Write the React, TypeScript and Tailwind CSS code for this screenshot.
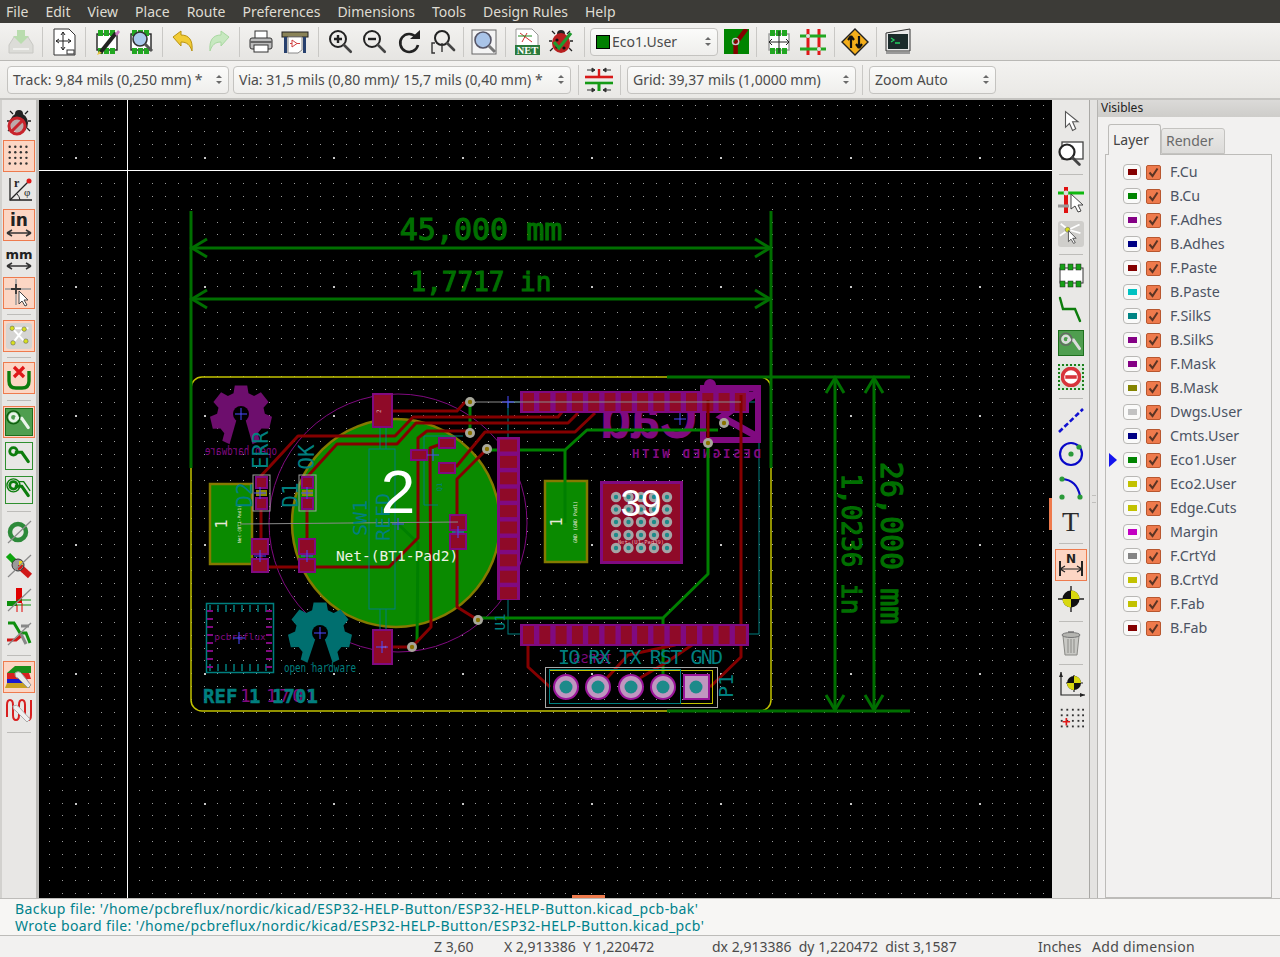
import type { ReactNode } from 'react'

const ui = { fontFamily: '"Noto Sans", sans-serif' }
const mono = '"DejaVu Sans Mono", monospace'

const menus = ['File', 'Edit', 'View', 'Place', 'Route', 'Preferences', 'Dimensions', 'Tools', 'Design Rules', 'Help']

const layers = [
  ['F.Cu', 'bg-[#840000]'],
  ['B.Cu', 'bg-[#008400]'],
  ['F.Adhes', 'bg-[#840084]'],
  ['B.Adhes', 'bg-[#000084]'],
  ['F.Paste', 'bg-[#840000]'],
  ['B.Paste', 'bg-[#00c2c2]'],
  ['F.SilkS', 'bg-[#008484]'],
  ['B.SilkS', 'bg-[#840084]'],
  ['F.Mask', 'bg-[#840084]'],
  ['B.Mask', 'bg-[#848400]'],
  ['Dwgs.User', 'bg-[#c2c2c2]'],
  ['Cmts.User', 'bg-[#000084]'],
  ['Eco1.User', 'bg-[#008400]'],
  ['Eco2.User', 'bg-[#c2c200]'],
  ['Edge.Cuts', 'bg-[#c2c200]'],
  ['Margin', 'bg-[#c200c2]'],
  ['F.CrtYd', 'bg-[#848484]'],
  ['B.CrtYd', 'bg-[#c2c200]'],
  ['F.Fab', 'bg-[#c2c200]'],
  ['B.Fab', 'bg-[#840000]'],
]

function Ic({ children, size = 'w-[28px] h-[28px]' }: { children: ReactNode; size?: string }) {
  return (
    <svg className={size} viewBox="0 0 28 28" fill="none">
      {children}
    </svg>
  )
}

function Btn({ children, w = 'w-[34px]' }: { children: ReactNode; w?: string }) {
  return <div className={`${w} h-[34px] flex items-center justify-center shrink-0`}>{children}</div>
}

function VSep({ w }: { w: string }) {
  return (
    <div className={`${w} h-[30px] flex justify-center shrink-0`}>
      <div className="w-px h-full bg-[#c9c8c5]" />
    </div>
  )
}

function Combo({ label, w, swatch }: { label: string; w: string; swatch?: boolean }) {
  return (
    <div className={`${w} h-[28px] shrink-0 rounded-[4px] border border-[#c4c3c0] bg-gradient-to-b from-[#fbfbfa] to-[#efeeec] flex items-center pl-[5px] pr-[6px] text-[14px] text-[#4b4b4b] whitespace-nowrap`}>
      {swatch && <span className="w-[14px] h-[14px] bg-[#007f00] border border-black mr-[2px]" />}
      <span className="flex-1">{label}</span>
      <span className="flex flex-col gap-[3px]">
        <span className="w-0 h-0 border-x-[3px] border-x-transparent border-b-[3px] border-b-[#6a6a6a]" />
        <span className="w-0 h-0 border-x-[3px] border-x-transparent border-t-[3px] border-t-[#6a6a6a]" />
      </span>
    </div>
  )
}

function Chip({ stroke = '#222' }: { stroke?: string }) {
  return (
    <>
      <rect x="4" y="6" width="20" height="16" fill="#fff" stroke={stroke} strokeWidth="1.4" />
      {[5, 11, 17].map((x) => (
        <g key={x}>
          <rect x={x} y="2" width="5" height="6" fill="#22a722" />
          <rect x={x} y="20" width="5" height="6" fill="#22a722" />
        </g>
      ))}
    </>
  )
}

function Bug({ mark }: { mark: 'check' | 'no' }) {
  return (
    <>
      <path d="M8 6 5 3M20 6l3-3M5 13H2M26 13h-3M6 20l-3 3M22 20l3 3" stroke="#222" strokeWidth="1.3" />
      <circle cx="14" cy="6" r="4" fill="#222" />
      <ellipse cx="14" cy="15" rx="9" ry="10" fill={mark === 'check' ? '#b81f1f' : '#222'} />
      {mark === 'check' && (
        <>
          <circle cx="10" cy="12" r="1.6" fill="#111" />
          <circle cx="10" cy="19" r="1.6" fill="#111" />
          <circle cx="17" cy="20" r="1.6" fill="#111" />
          <path d="M7 14l5 6L24 5" stroke="#1f9a2e" strokeWidth="3.2" />
        </>
      )}
      {mark === 'no' && (
        <>
          <circle cx="12" cy="18" r="8" fill="#f0d8d8" fillOpacity=".75" stroke="#c8242c" strokeWidth="3" />
          <path d="M7 23 18 12" stroke="#c8242c" strokeWidth="3" />
        </>
      )}
    </>
  )
}

function Lens({ cx, cy, r = 7, sw = 2, fill = 'none' }: { cx: number; cy: number; r?: number; sw?: number; fill?: string }) {
  const d = cx + r * 0.72
  const e = cy + r * 0.72
  return (
    <>
      <circle cx={cx} cy={cy} r={r} stroke="#222" strokeWidth={sw} fill={fill} />
      <path d={`M${d} ${e}l7 7`} stroke="#444" strokeWidth={sw + 0.6} strokeLinecap="round" />
    </>
  )
}

function TrackPad({ color = '#0d7d0d' }: { color?: string }) {
  return (
    <>
      <circle cx="8" cy="9" r="4" stroke={color} strokeWidth="3" />
      <path d="M11 10h6l7 10" stroke={color} strokeWidth="3.4" strokeLinecap="round" />
    </>
  )
}

function Slash() {
  return <path d="M3 25 26 3" stroke="#8a8a8a" strokeWidth="1.2" />
}

function TopToolbar() {
  return (
    <div className="h-[38px] shrink-0 flex items-center pl-[4px] bg-gradient-to-b from-[#f3f2f0] to-[#e6e5e2] border-b border-[#b9b8b5]">
      <Btn>
        <Ic>
          <path d="M2 17 7 9h14l5 8v8H2z" fill="#dcdcd8" stroke="#c8c8c4" />
          <rect x="6" y="20" width="16" height="2" fill="#efefed" />
          <path d="M10 2h8v6h4l-8 8-8-8h4z" fill="#b9dcae" />
        </Ic>
      </Btn>
      <VSep w="w-[9px]" />
      <Btn>
        <Ic>
          <path d="M4 1h15l6 6v20H4z" fill="#fff" stroke="#333" />
          <path d="M13 4v18M6 13h15M13 4l-2 3M13 4l2 3M13 22l-2-3M13 22l2-3M6 13l3-2M6 13l3 2M21 13l-3-2M21 13l-3 2" stroke="#222" />
          <rect x="17" y="22" width="7" height="4" fill="#fff" stroke="#333" />
        </Ic>
      </Btn>
      <VSep w="w-[9px]" />
      <Btn>
        <Ic>
          <Chip />
          <path d="M7 25 23 5" stroke="#222" strokeWidth="4" />
          <path d="M22 6l3-4 2 2-3 4z" fill="#c878c0" />
          <path d="M4 27l2-4 3 2z" fill="#e8c040" />
        </Ic>
      </Btn>
      <Btn>
        <Ic>
          <Chip />
          <circle cx="13" cy="11" r="7" fill="#a9c9ec" stroke="#333" strokeWidth="1.6" />
          <path d="M18 16l7 7" stroke="#555" strokeWidth="3" />
        </Ic>
      </Btn>
      <VSep w="w-[9px]" />
      <Btn>
        <Ic>
          <path d="M3 9 11 3v4c8 0 12 5 11 16-2-6-5-9-11-9v4z" fill="#f2cc35" stroke="#b8920f" />
        </Ic>
      </Btn>
      <Btn>
        <Ic>
          <path d="M25 9 17 3v4C9 7 5 12 6 23c2-6 5-9 11-9v4z" fill="#c7e8c0" stroke="#a8d8a0" />
        </Ic>
      </Btn>
      <VSep w="w-[9px]" />
      <Btn>
        <Ic>
          <rect x="8" y="3" width="12" height="8" fill="#fff" stroke="#333" />
          <rect x="3" y="10" width="22" height="11" rx="2" fill="#bcbcbc" stroke="#333" />
          <rect x="7" y="17" width="14" height="7" fill="#fff" stroke="#333" />
          <rect x="3" y="13" width="22" height="2" fill="#666" />
        </Ic>
      </Btn>
      <Btn>
        <Ic>
          <rect x="1" y="4" width="26" height="5" fill="#8a8358" stroke="#222" />
          <rect x="3" y="9" width="3" height="16" fill="#27406e" />
          <rect x="22" y="9" width="3" height="16" fill="#27406e" />
          <path d="M7 9h14v13l-4 3H7z" fill="#fff" stroke="#888" />
          <path d="M11 12v7l5-3.500zM9 15.500h2M16 15.500h3" stroke="#d04040" />
        </Ic>
      </Btn>
      <VSep w="w-[12px]" />
      <Btn>
        <Ic>
          <Lens cx={11} cy={11} r={8} />
          <path d="M7 11h8M11 7v8" stroke="#222" strokeWidth="2.4" />
        </Ic>
      </Btn>
      <Btn>
        <Ic>
          <Lens cx={11} cy={11} r={8} />
          <path d="M7 11h8" stroke="#222" strokeWidth="2.4" />
        </Ic>
      </Btn>
      <Btn>
        <Ic>
          <path d="M21 9a9 9 0 1 0 2 8" stroke="#222" strokeWidth="2.6" />
          <path d="M15 11h10V2z" fill="#222" />
        </Ic>
      </Btn>
      <Btn>
        <Ic>
          <Lens cx={13} cy={10} r={7} />
          <path d="M6 15H3v10h3" stroke="#333" strokeWidth="1.4" />
          <path d="M13 15v9" stroke="#333" strokeWidth="1.4" />
        </Ic>
      </Btn>
      <VSep w="w-[7px]" />
      <Btn>
        <Ic>
          <rect x="2" y="2" width="24" height="24" fill="#f4f4f4" stroke="#666" />
          <circle cx="13" cy="12" r="8" fill="#a9c4e8" stroke="#556" strokeWidth="1.6" />
          <path d="M19 18l6 6" stroke="#777" strokeWidth="3" />
        </Ic>
      </Btn>
      <VSep w="w-[9px]" />
      <Btn>
        <Ic>
          <path d="M3 1h16l6 6v11H3z" fill="#fff" stroke="#999" />
          <path d="M7 5l12 9M14 5 9 14" stroke="#d03030" />
          <path d="M5 8h14" stroke="#1d8a1d" />
          <rect x="2" y="17" width="25" height="10" fill="#2c7a3c" />
          <text x="14.500" y="26" textAnchor="middle" fontFamily='"Liberation Serif", serif' fontWeight="700" fontSize="10.500" fill="#fff">
            NET
          </text>
        </Ic>
      </Btn>
      <Btn>
        <Ic>
          <Bug mark="check" />
        </Ic>
      </Btn>
      <VSep w="w-[12px]" />
      <Combo label="Eco1.User" w="w-[128px]" swatch />
      <div className="w-[4px]" />
      <Btn w="w-[28px]">
        <Ic size="w-[25px] h-[25px]">
          <rect width="28" height="28" fill="#008400" />
          <path d="M13 28V16L25 0" stroke="#840000" strokeWidth="5" />
          <circle cx="13" cy="14" r="3.500" stroke="#c8c8c8" strokeWidth="1.6" />
        </Ic>
      </Btn>
      <VSep w="w-[12px]" />
      <Btn>
        <Ic>
          <Chip stroke="#999" />
          <path d="M4 14h20M4 14l3-3M4 14l3 3M24 14l-3-3M24 14l-3 3M14 3v22" stroke="#222" />
        </Ic>
      </Btn>
      <Btn>
        <Ic>
          <path d="M9 1v26M20 1v26" stroke="#e01818" strokeWidth="3" />
          <path d="M1 8h26M1 21h26" stroke="#22a722" strokeWidth="3" />
          <circle cx="9" cy="8" r="2" fill="#ddd" />
          <circle cx="20" cy="21" r="2" fill="#ddd" />
        </Ic>
      </Btn>
      <VSep w="w-[8px]" />
      <Btn>
        <Ic>
          <path d="M14 1 27 14 14 27 1 14z" fill="#f4ae1a" stroke="#222" strokeWidth="1.4" />
          <path d="M10 20V8M10 8 7 12M10 8l3 4M18 8v12M18 20l-3-4M18 20l3-4" stroke="#111" strokeWidth="2.2" />
        </Ic>
      </Btn>
      <VSep w="w-[9px]" />
      <Btn>
        <Ic>
          <path d="M2 5 26 1v22H2z" fill="#e8e8e8" stroke="#333" />
          <rect x="4" y="6" width="20" height="15" fill="#1a2a2a" />
          <path d="M7 10l3 2-3 2M11 15h5" stroke="#22d060" strokeWidth="1.3" />
          <path d="M2 25h24" stroke="#999" strokeWidth="2" />
        </Ic>
      </Btn>
    </div>
  )
}

function AuxToolbar() {
  return (
    <div className="h-[37px] shrink-0 flex items-center pl-[7px] bg-gradient-to-b from-[#f3f2f0] to-[#e9e8e5]">
      <Combo label="Track: 9,84 mils (0,250 mm) *" w="w-[222px]" />
      <div className="w-[4px]" />
      <Combo label="Via: 31,5 mils (0,80 mm)/ 15,7 mils (0,40 mm) *" w="w-[338px]" />
      <VSep w="w-[14px]" />
      <Btn w="w-[28px]">
        <Ic>
          <path d="M2 4h8M18 4h8M10 4 7 2v4zM18 4l3-2v4zM2 24h8M18 24h8M10 24l-3-2v4zM18 24l3-2v4z" stroke="#333" fill="#333" />
          <path d="M14 3v9" stroke="#d81818" strokeWidth="2.4" />
          <path d="M0 11h28" stroke="#d81818" strokeWidth="2.6" />
          <path d="M0 17h28" stroke="#159a15" strokeWidth="2.6" />
          <path d="M14 17v8" stroke="#159a15" strokeWidth="3" />
        </Ic>
      </Btn>
      <VSep w="w-[14px]" />
      <Combo label="Grid: 39,37 mils (1,0000 mm)" w="w-[229px]" />
      <VSep w="w-[13px]" />
      <Combo label="Zoom Auto" w="w-[127px]" />
    </div>
  )
}

function Side({ children, active, h = 'h-[34px]' }: { children: ReactNode; active?: boolean; h?: string }) {
  return (
    <div className={`${h} shrink-0 flex items-center justify-center`}>
      <div className={`w-[32px] h-[32px] flex items-center justify-center ${active ? 'bg-[#fcd6c4] border-[1.5px] border-[#ee7b4e]' : ''}`}>{children}</div>
    </div>
  )
}

function HSep({ h = 'h-[9px]' }: { h?: string }) {
  return (
    <div className={`${h} shrink-0 flex items-center justify-center`}>
      <div className="w-[24px] h-px bg-[#bdbcb9]" />
    </div>
  )
}

function LeftToolbar() {
  return (
    <div className="w-[39px] shrink-0 bg-[#e8e7e5] border-l-[2px] border-l-[#d2d1ce] border-r-[3px] border-r-[#bcbbb8] flex flex-col pt-[5px] pr-px">
      <Side>
        <Ic>
          <Bug mark="no" />
        </Ic>
      </Side>
      <Side active>
        <Ic size="w-[26px] h-[26px]">
          {[4, 10, 16, 22].map((y) =>
            [4, 10, 16, 22].map((x) => <circle key={`${x}-${y}`} cx={x} cy={y} r="1.300" fill="#333" />),
          )}
        </Ic>
      </Side>
      <Side>
        <Ic>
          <path d="M5 2v22h22" stroke="#222" strokeWidth="1.3" />
          <path d="M5 24 23 6" stroke="#222" strokeWidth="1.3" />
          <circle cx="24" cy="5" r="2.500" fill="#e01818" />
          <path d="M15 24a10 10 0 0 0-3-6" stroke="#222" />
          <text x="9" y="11" fontFamily='"Liberation Serif", serif' fontWeight="700" fontSize="12" fill="#222">r</text>
          <text x="19" y="20" fontFamily='"Liberation Serif", serif' fontSize="11" fill="#222">φ</text>
        </Ic>
      </Side>
      <Side active h="h-[35px]">
        <Ic>
          <text x="14" y="15" textAnchor="middle" fontFamily='"DejaVu Sans", sans-serif' fontWeight="700" fontSize="17" fill="#222">in</text>
          <path d="M2 22h24M2 22l5-3M2 22l5 3M26 22l-5-3M26 22l-5 3" stroke="#333" strokeWidth="1.500" />
        </Ic>
      </Side>
      <Side>
        <Ic>
          <text x="14" y="14" textAnchor="middle" fontFamily='"DejaVu Sans", sans-serif' fontWeight="700" fontSize="13" fill="#222">mm</text>
          <path d="M2 21h24M2 21l5-3M2 21l5 3M26 21l-5-3M26 21l-5 3" stroke="#333" strokeWidth="1.500" />
        </Ic>
      </Side>
      <Side active>
        <Ic>
          <path d="M0 10h9M12 10h14" stroke="#999" strokeWidth="1.500" />
          <path d="M11 0v8M11 12v14" stroke="#999" strokeWidth="1.500" />
          <path d="M6 10h10M11 5v10" stroke="#333" strokeWidth="1.800" />
          <path d="M14 12v13l3-3 3 5 2-1-3-5h4z" fill="#fff" stroke="#444" />
        </Ic>
      </Side>
      <HSep />
      <Side active>
        <div className="w-[26px] h-[26px] rounded-[3px] bg-[#d6d5d3] flex items-center justify-center">
          <Ic size="w-[24px] h-[24px]">
            <path d="M7 6l15 16M20 5 7 22M3 5h22" stroke="#fff" strokeWidth="2.400" />
            <circle cx="6" cy="5" r="2.600" fill="#d8e020" stroke="#555" strokeWidth=".6" />
            <circle cx="20" cy="6" r="2.600" fill="#d8e020" stroke="#555" strokeWidth=".6" />
            <circle cx="7" cy="22" r="2.600" fill="#d8e020" stroke="#555" strokeWidth=".6" />
            <circle cx="22" cy="20" r="2.600" fill="#d8e020" stroke="#555" strokeWidth=".6" />
          </Ic>
        </div>
      </Side>
      <HSep h="h-[8px]" />
      <Side active>
        <Ic>
          <path d="M4 7v10q0 7 7 7h6q7 0 7-7V7" stroke="#0d7d0d" strokeWidth="3.400" />
          <path d="M9 3l10 10M19 3 9 13" stroke="#e01818" strokeWidth="3.200" />
        </Ic>
      </Side>
      <HSep h="h-[10px]" />
      <Side active>
        <div className="w-[28px] h-[28px] bg-[#4f9e4f] border border-[#1d6f1d] flex items-center justify-center">
          <Ic size="w-[26px] h-[26px]">
            <TrackPad color="#eaf4ea" />
            <circle cx="8" cy="9" r="7" stroke="#0d5d0d" strokeWidth="1.500" />
          </Ic>
        </div>
      </Side>
      <Side>
        <div className="w-[28px] h-[28px] border border-[#2f8f2f] flex items-center justify-center">
          <Ic size="w-[26px] h-[26px]">
            <TrackPad />
          </Ic>
        </div>
      </Side>
      <Side>
        <div className="w-[28px] h-[28px] border border-[#2f8f2f] flex items-center justify-center">
          <Ic size="w-[26px] h-[26px]">
            <TrackPad />
            <circle cx="8" cy="9" r="7" stroke="#0d7d0d" strokeWidth="1.500" />
            <path d="M14 5h5l7 10" stroke="#0d7d0d" strokeWidth="1.500" />
          </Ic>
        </div>
      </Side>
      <HSep h="h-[8px]" />
      <Side>
        <Ic>
          <circle cx="13" cy="14" r="8" stroke="#2d8a3a" strokeWidth="4.500" />
          <Slash />
        </Ic>
      </Side>
      <Side>
        <Ic>
          <path d="M3 3 13 13" stroke="#0fa50f" strokeWidth="6" />
          <path d="M13 13l12 11" stroke="#d01818" strokeWidth="6" />
          <circle cx="13" cy="13" r="6" fill="#9a9a9a" stroke="#333" />
          <path d="M13 13h5a5 5 0 0 1-5 5z" fill="#d01818" />
          <path d="M14 9h3l1 4h-4z" fill="#e8d020" />
          <Slash />
        </Ic>
      </Side>
      <Side>
        <Ic>
          <rect x="11" y="2" width="6" height="15" fill="#e00000" />
          <rect x="2" y="15" width="10" height="5" fill="#0d8f0d" />
          <path d="M12 14h14M12 19h14" stroke="#0d8f0d" />
          <path d="M12 19v7M17 17v9" stroke="#e00000" />
          <Slash />
        </Ic>
      </Side>
      <Side>
        <Ic>
          <path d="M3 3h6l6 10h6l4 10" stroke="#0f8f0f" strokeWidth="3" />
          <path d="M16 6h8" stroke="#888" strokeWidth="3" />
          <path d="M2 20h9l6-5" stroke="#d01818" strokeWidth="3" />
          <path d="M16 14l5 10" stroke="#888" strokeWidth="3" />
          <Slash />
        </Ic>
      </Side>
      <HSep />
      <Side active>
        <Ic>
          <path d="M2 10 10 3h16v7z" fill="#1a8f1a" />
          <path d="M2 10h22l2 6H2z" fill="#d82020" />
          <path d="M2 16h20l2 4H2z" fill="#1818d0" />
          <path d="M2 20h20l3 5H0z" fill="#c8a020" />
          <path d="M10 10q4-3 7 1l9 11-3 3-10-10q-3 0-3-5z" fill="#e8e8e8" stroke="#999" />
        </Ic>
      </Side>
      <Side>
        <Ic>
          <path d="M2 20V8q0-5 3-5t3 5v10q0 5 3 5t3-5V8q0-5 3-5t3 5v10q0 5 3 5t3-5V3" stroke="#d82020" strokeWidth="2" />
          <path d="M8 9q4-2 6 1l11 12-3 3L11 14q-3-1-3-5z" fill="#efefef" stroke="#aaa" />
        </Ic>
      </Side>
      <HSep />
    </div>
  )
}

function RightToolbar() {
  return (
    <div className="w-[38px] shrink-0 bg-[#e9e8e6] border-r border-r-[#a9a8a5] flex flex-col pt-[5px]">
      <Side h="h-[32px]">
        <Ic size="w-[22px] h-[22px]">
          <path d="M7 2v20l5-5 4 9 4-2-4-9h7z" fill="#fff" stroke="#555" strokeWidth="1.400" />
        </Ic>
      </Side>
      <Side h="h-[31px]">
        <Ic>
          <rect x="5" y="3" width="21" height="17" stroke="#444" strokeWidth="1.300" fill="#fff" />
          <Lens cx={10} cy={13} r={7.500} sw={2.200} fill="#fff" />
        </Ic>
      </Side>
      <HSep h="h-[13px]" />
      <Side h="h-[36px]">
        <Ic>
          <path d="M9 2v26" stroke="#e01010" strokeWidth="4" />
          <path d="M1 8h26" stroke="#0fb80f" strokeWidth="3" />
          <path d="M1 21h11" stroke="#999" strokeWidth="3" />
          <circle cx="9" cy="8" r="2.400" fill="#ddd" />
          <path d="M14 9v15l4-3 3 6 3-1-3-6h5z" fill="#fff" stroke="#444" />
        </Ic>
      </Side>
      <Side>
        <div className="w-[26px] h-[26px] rounded-[3px] bg-[#cfcecb] flex items-center justify-center">
          <Ic size="w-[24px] h-[24px]">
            <path d="M11 9 2 2M11 9l13-6M11 9 1 16M11 9l14 4" stroke="#fff" strokeWidth="2" />
            <circle cx="10" cy="9" r="2.800" fill="#d8e020" stroke="#555" strokeWidth=".6" />
            <path d="M11 10v13l3-3 3 5 2-1-3-5h4z" fill="#fff" stroke="#444" />
          </Ic>
        </div>
      </Side>
      <HSep h="h-[7px]" />
      <Side>
        <Ic>
          <rect x="3" y="7" width="23" height="15" fill="#fff" stroke="#333" />
          {[3, 11, 19].map((x) => (
            <g key={x}>
              <rect x={x} y="3" width="5" height="6" fill="#16a016" stroke="#222" strokeWidth=".5" />
              <rect x={x} y="20" width="5" height="6" fill="#16a016" stroke="#222" strokeWidth=".5" />
            </g>
          ))}
        </Ic>
      </Side>
      <Side>
        <Ic>
          <path d="M3 3l3 11h12l5 12" stroke="#0d7d0d" strokeWidth="2.400" strokeLinecap="round" />
        </Ic>
      </Side>
      <Side>
        <div className="w-[26px] h-[26px] bg-[#4f9e4f] border border-[#1d6f1d] flex items-center justify-center">
          <Ic size="w-[25px] h-[25px]">
            <TrackPad color="#dcdcdc" />
            <circle cx="8" cy="9" r="7" stroke="#666" strokeWidth="1.400" />
          </Ic>
        </div>
      </Side>
      <Side>
        <div className="w-[26px] h-[26px] border-2 border-dotted border-[#1d7f1d] bg-[#d8e8d8] flex items-center justify-center">
          <Ic size="w-[20px] h-[20px]">
            <circle cx="14" cy="14" r="12" fill="#fff" stroke="#d8343c" strokeWidth="5" />
            <path d="M6 14h16" stroke="#d8343c" strokeWidth="5" />
          </Ic>
        </div>
      </Side>
      <HSep />
      <Side>
        <Ic>
          <path d="M2 26 26 3" stroke="#1010d0" strokeWidth="2.600" strokeDasharray="5 2.500" />
        </Ic>
      </Side>
      <Side>
        <Ic>
          <circle cx="14" cy="14" r="11" stroke="#0808c8" strokeWidth="2.200" />
          <circle cx="14" cy="14" r="2.600" fill="#2b9a3a" />
          <circle cx="22" cy="7" r="2.600" fill="#2b9a3a" />
        </Ic>
      </Side>
      <Side>
        <Ic>
          <path d="M5 5q15 1 18 17" stroke="#0808c8" strokeWidth="2.200" />
          <circle cx="5" cy="5" r="2.600" fill="#2b9a3a" />
          <circle cx="5" cy="23" r="2.600" fill="#2b9a3a" />
          <circle cx="23" cy="23" r="2.600" fill="#2b9a3a" />
        </Ic>
      </Side>
      <Side>
        <span className="text-[28px] leading-none text-[#2a2a2a]" style={{ fontFamily: '"Liberation Serif", serif' }}>
          T
        </span>
      </Side>
      <HSep />
      <Side active>
        <Ic>
          <text x="14" y="12" textAnchor="middle" fontFamily='"DejaVu Sans", sans-serif' fontSize="12" fontWeight="600" fill="#222">N</text>
          <path d="M3 10v15M25 10v15" stroke="#222" strokeWidth="2" />
          <path d="M3 18h22M3 18l5-3M3 18l5 3M25 18l-5-3M25 18l-5 3" stroke="#222" strokeWidth="1.200" />
        </Ic>
      </Side>
      <Side>
        <Ic>
          <path d="M14 1v26M1 14h26" stroke="#222" strokeWidth="1.400" />
          <circle cx="14" cy="14" r="8.500" fill="#111" />
          <path d="M14 5.500a8.500 8.500 0 0 1 8.500 8.500H14zM14 22.500a8.500 8.500 0 0 1-8.500-8.500H14z" fill="#d8d810" />
        </Ic>
      </Side>
      <HSep h="h-[10px]" />
      <Side>
        <Ic>
          <path d="M6 7h16l-2 19H8z" fill="#c8c8c4" stroke="#8a8a86" />
          <path d="M11 10v14M14 10v14M17 10v14" stroke="#8c8c88" />
          <ellipse cx="14" cy="6" rx="9" ry="2.500" fill="#b5b5b1" stroke="#777" />
          <path d="M11 3h6" stroke="#777" strokeWidth="1.500" />
        </Ic>
      </Side>
      <HSep h="h-[8px]" />
      <Side>
        <Ic>
          <path d="M4 1v23h24" stroke="#222" strokeWidth="1.200" />
          <path d="M4 1 2 6h4zM28 24l-5-2v4z" fill="#222" />
          <path d="M17 4v17M9 12h17" stroke="#222" strokeWidth="1.200" />
          <circle cx="17" cy="12" r="7" fill="#111" />
          <path d="M17 5a7 7 0 0 1 7 7h-7zM17 19a7 7 0 0 1-7-7h7z" fill="#d8d810" />
        </Ic>
      </Side>
      <Side>
        <Ic size="w-[26px] h-[26px]">
          {[3, 9, 15, 21].map((y) =>
            [3, 9, 15, 21, 26].map((x) => <rect key={`${x}-${y}`} x={x} y={y} width="2" height="2" fill="#333" />),
          )}
          <path d="M9 13v8M5 17h8" stroke="#e01818" strokeWidth="1.800" />
        </Ic>
      </Side>
    </div>
  )
}

function gear(cx: number, cy: number, R: number, r: number) {
  const pts: string[] = []
  const n = 7
  for (let i = 0; i < n; i++) {
    const a = (i * 2 * Math.PI) / n - Math.PI / 2
    const offs: [number, number][] = [
      [-0.32, r],
      [-0.2, R],
      [0.2, R],
      [0.32, r],
    ]
    offs.forEach(([o, rad]) => {
      pts.push(`${(cx + Math.cos(a + o) * rad).toFixed(1)},${(cy + Math.sin(a + o) * rad).toFixed(1)}`)
    })
  }
  return pts.join(' ')
}

function gridPath() {
  let small = ''
  let big = ''
  for (let i = -13; i < 67; i++) {
    const x = Math.round(204 + i * 12.91)
    for (let j = -4; j < 58; j++) {
      const y = Math.round(157 + j * 12.91)
      if (i % 10 === 0 && j % 10 === 0) big += `M${x} ${y}h2v2h-2z`
      else small += `M${x} ${y}h1v1h-1z`
    }
  }
  return { small, big }
}

const grid = gridPath()

const RED = '#840000'
const GREEN = '#007f00'
const DIM = '#006f00'
const PUR = '#800a80'
const PAD = '#8f0a28'
const TEAL = '#007f7f'

function Pad({ x, y, w, h }: { x: number; y: number; w: number; h: number }) {
  return (
    <>
      <rect x={x} y={y} width={w} height={h} fill={PUR} />
      <rect x={x + 2} y={y + 2} width={w - 4} height={h - 4} fill={PAD} />
    </>
  )
}

function Cross({ x, y, s = 6 }: { x: number; y: number; s?: number }) {
  return <path d={`M${x - s} ${y}h${2 * s}M${x} ${y - s}v${2 * s}`} stroke="#4a4aff" strokeWidth="1" />
}

function Line({ d, c = RED, w = 3 }: { d: string; c?: string; w?: number }) {
  return <polyline points={d} fill="none" stroke={c} strokeWidth={w} strokeLinejoin="round" />
}

function Via({ x, y }: { x: number; y: number }) {
  return (
    <>
      <circle cx={x} cy={y} r="5" fill="#a8a89c" />
      <circle cx={x} cy={y} r="2.200" fill="#8a7400" />
    </>
  )
}

function Arrow({ x, y, dir }: { x: number; y: number; dir: 'l' | 'r' | 'u' | 'd' }) {
  const a = dir === 'l' ? `${x + 15},${y - 9} ${x},${y} ${x + 15},${y + 9}` : dir === 'r' ? `${x - 15},${y - 9} ${x},${y} ${x - 15},${y + 9}` : dir === 'u' ? `${x - 9},${y + 15} ${x},${y} ${x + 9},${y + 15}` : `${x - 9},${y - 15} ${x},${y} ${x + 9},${y - 15}`
  return <polyline points={a} fill="none" stroke={DIM} strokeWidth="3" />
}

function Board() {
  const stripX = Array.from({ length: 14 }, (_, i) => 523 + i * 16.3)
  const stripY = Array.from({ length: 10 }, (_, i) => 439.5 + i * 16.4)
  const bgaX = [616, 628.5, 641, 654, 667]
  const bgaY = [497, 509.5, 522, 535, 548]
  const ticks = [210, 218, 226, 234, 242, 250, 258, 266]
  const ticksV = [611, 619, 627, 635, 643, 651, 659, 667]
  return (
    <svg className="block w-[1013px] h-[798px]" viewBox="39 100 1013 798">
      <rect x="39" y="100" width="1013" height="798" fill="#000" />
      <path d={grid.small} fill="#9c9c9c" />
      <path d={grid.big} fill="#c8c8c8" />

      {/* outlines on silk and fab layers */}
      <rect x="508" y="402" width="251" height="232" fill="none" stroke={TEAL} />
      <circle cx="398" cy="523" r="129" fill="none" stroke={PUR} />

      {/* copper zones */}
      <circle cx="396" cy="523" r="104" fill="#0a8a00" stroke="#857a00" strokeWidth="2.500" />
      <rect x="210" y="484" width="42" height="80" fill="#0a8a00" stroke="#857a00" strokeWidth="2.500" />
      <rect x="545" y="481" width="42" height="81" fill="#0a8a00" stroke="#857a00" strokeWidth="2.500" />

      {/* KiCad logo, mirrored on the back silk */}
      <text transform="translate(697 438) scale(-0.92 1.1)" fontFamily='"Liberation Sans", sans-serif' fontWeight="700" fontSize="56" fill={PUR}>
        Cad
      </text>
      <rect x="703" y="388" width="55" height="52" fill="none" stroke={PUR} strokeWidth="6" />
      <path d="M758 392 722 417l36 20M745 395h13" fill="none" stroke={PUR} strokeWidth="7" />
      <circle cx="710" cy="385" r="6" fill={PUR} />
      <text transform="translate(761 458) scale(-1 1)" fontFamily={mono} fontWeight="700" fontSize="12.500" letterSpacing="2.600" fill={PUR}>
        DESIGNED WITH
      </text>

      {/* green tracks */}
      <Line c={GREEN} d="470,402 470,433" w={3} />
      <Line c={GREEN} d="478,618 663,618 708,574 708,443" />
      <Line c={GREEN} d="718,430 587,430 565,450 490,450" />
      <Line c={GREEN} d="565,450 565,523" />
      <Line c={GREEN} d="663,618 663,674" />
      <Line c={GREEN} d="397,523 418,543 417,643" />

      {/* red tracks */}
      <Line d="260,477 298,436 395,436 413,417 558,417 562,412" />
      <Line d="307,477 337,444 397,444 416,423 568,423 578,413" />
      <Line d="456,467 485,432 575,432 595,413" />
      <Line d="418,458 418,438 427,431 470,431" />
      <Line d="418,450 418,538 389,567 260,567" />
      <Line d="447,442 430,448 431,627 412,647 382,647" />
      <Line d="392,411 457,411 465,402" />
      <Line d="487,449 457,479 457,607 478,620" />
      <Line d="261,510 261,560" />
      <Line d="307,510 307,560" />
      <Line d="741,403 741,657 710,687" />
      <Line d="528,635 528,667 550,687" />
      <Line d="675,635 675,645 628,655 607,678" />
      <Line d="692,635 692,645 667,662 640,678" />

      {/* switch outline and pads */}
      <rect x="369" y="449" width="26" height="160" fill="none" stroke={TEAL} />
      <path d="M380 428v21M386 428v21M380 609v20M386 609v20" stroke={TEAL} />
      <Pad x={372} y={393} w={21} h={35} />
      <Pad x={372} y={629} w={21} h={36} />
      <text transform="translate(381 413) rotate(-90)" fontFamily={mono} fontSize="6" fill="#e0b0b0">2</text>
      <text transform="translate(386 649) rotate(-90)" fontFamily={mono} fontSize="6" fill="#e0b0b0">1</text>

      {/* LEDs */}
      <rect x="253" y="475" width="17" height="36" fill="none" stroke="#a0a0a0" />
      <rect x="299" y="475" width="17" height="36" fill="none" stroke="#a0a0a0" />
      <Pad x={255} y={476} w={13} h={13} />
      <Pad x={255} y={497} w={13} h={13} />
      <Pad x={301} y={476} w={13} h={13} />
      <Pad x={301} y={497} w={13} h={13} />
      <rect x="256" y="490" width="11" height="6" fill="#8a8a00" />
      <rect x="302" y="490" width="11" height="6" fill="#8a8a00" />

      <Pad x={251} y={538} w={18} h={17} />
      <Pad x={251} y={558} w={18} h={15} />
      <Pad x={298} y={538} w={18} h={17} />
      <Pad x={298} y={558} w={18} h={15} />

      {/* Q1 */}
      <path d="M463 436h-39v69h14" fill="none" stroke={TEAL} />
      <Pad x={410} y={449} w={18} h={12} />
      <Pad x={438} y={437} w={18} h={12} />
      <Pad x={438} y={462} w={18} h={12} />
      <Pad x={449} y={514} w={18} h={17} />
      <Pad x={449} y={533} w={18} h={17} />

      {/* headers */}
      <rect x="497" y="437" width="23" height="163" fill={PUR} />
      {stripY.map((y) => (
        <rect key={y} x="500" y={y} width="17" height="12" fill={PAD} />
      ))}
      {[391, 624].map((y) => (
        <g key={y}>
          <rect x="520" y={y} width="229" height="22" fill={PUR} />
          {stripX.map((x) => (
            <rect key={x} x={x} y={y + 2} width="11" height="18" fill={PAD} />
          ))}
        </g>
      ))}
      <Line d="708,400 708,443" />
      <Line d="741,395 741,420" />

      {/* BGA */}
      <rect x="600" y="481" width="83" height="83" fill={PUR} />
      <rect x="603" y="484" width="77" height="77" fill={PAD} />
      {bgaY.map((y) =>
        bgaX.map((x) => (
          <g key={`${x}-${y}`}>
            <circle cx={x} cy={y} r="5.200" fill="#a5a5a5" />
            <circle cx={x} cy={y} r="2.200" fill="#1d8a8a" />
          </g>
        )),
      )}

      {/* connector */}
      <rect x="545.500" y="667.500" width="172" height="40" fill="none" stroke="#a8a8a8" />
      <rect x="549.500" y="670.500" width="163" height="33" fill="none" stroke="#c2c200" />
      <rect x="549.500" y="669.500" width="131" height="34" fill="none" stroke={TEAL} />
      {[566, 598, 631, 663].map((x) => (
        <g key={x}>
          <circle cx={x} cy="687" r="13" fill="#9a149a" />
          <circle cx={x} cy="687" r="11" fill="#c096c0" />
          <circle cx={x} cy="687" r="6.500" fill="#1d8a8a" />
        </g>
      ))}
      <rect x="683" y="674" width="27" height="26" fill="#9a149a" />
      <rect x="685" y="676" width="23" height="22" fill="#c096c0" />
      <circle cx="696" cy="687" r="6.500" fill="#1d8a8a" />

      {/* ratsnest */}
      <path d="M240 524 458 522M470 402H741" stroke="#8a8a8a" />

      {/* vias */}
      <Via x={470} y={402} />
      <Via x={470} y={433} />
      <Via x={487} y={449} />
      <Via x={478} y={620} />
      <Via x={412} y={647} />
      <Via x={708} y={443} />
      <Via x={724} y={423} />

      {/* gears */}
      <polygon points={gear(241, 416, 31, 24)} fill="#6d0e6d" />
      <circle cx="241" cy="414" r="8" fill="#000" />
      <polygon points="237,418 245,418 253,446 229,446" fill="#000" />
      <polygon points={gear(320, 634, 32, 25)} fill="#006f6f" />
      <circle cx="320" cy="633" r="8" fill="#000" />
      <polygon points="316,637 324,637 333,664 307,664" fill="#000" />
      <text transform="translate(277 455) scale(-1 1)" fontFamily={mono} fontSize="13" textLength="72" lengthAdjust="spacingAndGlyphs" fill={PUR}>
        open hardware
      </text>
      <text x="284" y="672" fontFamily={mono} fontSize="13" textLength="72" lengthAdjust="spacingAndGlyphs" fill={TEAL}>
        open hardware
      </text>

      {/* logo block bottom left */}
      <rect x="206.500" y="603.500" width="67" height="69" fill="none" stroke={TEAL} strokeWidth="1.500" />
      {ticks.map((x) => (
        <path key={x} d={`M${x} 605v7M${x} 664v7`} stroke={TEAL} strokeWidth="1.500" />
      ))}
      {ticksV.map((y) => (
        <path key={y} d={`M207 ${y}h6M266 ${y}h6`} stroke={PUR} strokeWidth="2" />
      ))}
      <text x="240" y="640" textAnchor="middle" fontFamily={mono} fontSize="9.500" fill={PUR}>
        pcbreflux
      </text>
      <text x="240" y="702" fontFamily={mono} fontSize="18" textLength="76" fill={PUR}>
        1 1701
      </text>
      <text x="203" y="703" fontFamily={mono} fontWeight="700" fontSize="19" textLength="115" stroke={TEAL} strokeWidth=".4" fill={TEAL}>
        REF 1 1701
      </text>
      <text transform="translate(612 663) scale(-1 1)" fontFamily={mono} fontSize="13" fill={PUR}>
        ISPSS
      </text>

      {/* silk texts */}
      <g fontFamily={mono} fill={TEAL}>
        <text transform="translate(252 495) rotate(-90)" textAnchor="middle" fontSize="21">D2</text>
        <text transform="translate(298 495) rotate(-90)" textAnchor="middle" fontSize="21">D1</text>
        <text transform="translate(268 450) rotate(-90)" textAnchor="middle" fontSize="21">ERR</text>
        <text transform="translate(314 457) rotate(-90)" textAnchor="middle" fontSize="21">OK</text>
        <text transform="translate(367 518) rotate(-90)" textAnchor="middle" fontSize="20">SW1</text>
        <text transform="translate(390 517) rotate(-90)" textAnchor="middle" fontSize="20">REED</text>
        <text transform="translate(505 622) rotate(-90)" textAnchor="middle" fontSize="14">U1</text>
        <text transform="translate(733 686) rotate(-90)" textAnchor="middle" fontSize="20">P1</text>
        <text transform="translate(442 487) rotate(-90)" textAnchor="middle" fontSize="7">Q1</text>
        <text x="558" y="664" fontSize="20" textLength="165">IO RX TX RST GND</text>
      </g>

      {/* pad names */}
      <g fontFamily={mono} fill="#e8e8d8">
        <text transform="translate(227 524) rotate(-90)" textAnchor="middle" fontSize="15">1</text>
        <text transform="translate(241 524) rotate(-90)" textAnchor="middle" fontSize="4.500">Net-(BT1-Pad1)</text>
        <text transform="translate(562 522) rotate(-90)" textAnchor="middle" fontSize="15">1</text>
        <text transform="translate(577 522) rotate(-90)" textAnchor="middle" fontSize="5">GND (GND Pad1)</text>
        <text x="398" y="513" textAnchor="middle" fontFamily='"Liberation Sans", sans-serif' fontSize="62" fill="#fff">2</text>
        <text x="397" y="561" textAnchor="middle" fontSize="14.500" fill="#eef2e4">Net-(BT1-Pad2)</text>
        <text x="641" y="516" textAnchor="middle" fontFamily='"Liberation Sans", sans-serif' fontSize="37" fill="#fff">39</text>
        <text x="641" y="544" textAnchor="middle" fontSize="5.500" fill="#e8b0b0">Net-(U1-Pad39)</text>
      </g>

      {/* anchors */}
      <Cross x={241} y={414} />
      <Cross x={320} y={633} />
      <Cross x={239} y={638} />
      <Cross x={260} y={493} />
      <Cross x={307} y={493} />
      <Cross x={260} y={556} />
      <Cross x={307} y={556} />
      <Cross x={382} y={647} />
      <Cross x={398} y={524} />
      <Cross x={433} y={455} />
      <Cross x={458} y={532} />
      <Cross x={508} y={402} />
      <Cross x={680} y={419} />

      {/* edge cuts */}
      <rect x="191" y="377" width="580" height="334" rx="11" fill="none" stroke="#c2c200" strokeWidth="1.500" />

      {/* dimensions */}
      <path d="M191 211V468M771 211V468M667 377H910M667 711H910" stroke={DIM} strokeWidth="3" />
      <path d="M191 248H771M191 299H771M835 377V711M874 377V711" stroke={DIM} strokeWidth="3" />
      <Arrow x={192} y={248} dir="l" />
      <Arrow x={770} y={248} dir="r" />
      <Arrow x={192} y={299} dir="l" />
      <Arrow x={770} y={299} dir="r" />
      <Arrow x={835} y={378} dir="u" />
      <Arrow x={874} y={378} dir="u" />
      <Arrow x={835} y={710} dir="d" />
      <Arrow x={874} y={710} dir="d" />
      <g fontFamily={mono} fill={DIM} stroke={DIM} strokeWidth="1.100" textAnchor="middle">
        <text x="481" y="240" fontSize="30">45,000 mm</text>
        <text x="481" y="291" fontSize="26">1,7717 in</text>
        <text transform="translate(842 544) rotate(90)" fontSize="26">1,0236 in</text>
        <text transform="translate(881 543) rotate(90)" fontSize="30">26,000 mm</text>
      </g>

      {/* cursor */}
      <path d="M127.500 100V898M39 170.500H1052" stroke="#fff" />
    </svg>
  )
}

function LayerPanel() {
  return (
    <div className="flex-1 flex flex-col bg-[#f2f1f0] border-l border-[#b5b4b1]">
      <div className="h-[17px] shrink-0 pl-[3px] text-[12px] leading-[15px] text-[#222] bg-gradient-to-b from-[#dbdad8] to-[#cecdca]">Visibles</div>
      <div className="flex-1 flex flex-col pl-[7px] pr-[8px] pt-[6px]">
        <div className="flex items-end pl-[3px] h-[31px] shrink-0">
          <div className="w-[53px] h-[31px] relative z-10 -mb-px bg-[#f2f1f0] border border-b-0 border-[#bdbcb9] rounded-t-[3px] pl-[4px] pt-[5px] text-[14px] leading-[20px] text-[#444]">Layer</div>
          <div className="w-[64px] h-[26px] bg-gradient-to-b from-[#ebeae8] to-[#dcdbd9] border border-[#c4c3c0] rounded-t-[3px] pl-[4px] pt-[2px] text-[14px] leading-[20px] text-[#6a6a6a]">Render</div>
        </div>
        <div className="flex-1 border border-[#bdbcb9] pt-[5px] px-[4px]">
          {layers.map(([name, color], i) => (
            <div key={name} className="h-[24px] flex items-center relative pl-[13px]">
              {i === 12 && <span className="absolute left-[-1px] top-[5px] w-0 h-0 border-y-[7px] border-y-transparent border-l-[8px] border-l-[#1414ee]" />}
              <span className="w-[18px] h-[16px] rounded-[4px] border border-[#b8b7b4] bg-[#fafaf9] flex items-center justify-center">
                <span className={`w-[9px] h-[6px] ${color}`} />
              </span>
              <span className="ml-[5px] w-[15px] h-[15px] rounded-[2px] bg-[#ee7a4c] border border-[#b8572f] flex items-center justify-center">
                <svg className="w-[11px] h-[11px]" viewBox="0 0 11 11" fill="none">
                  <path d="M1.500 5.500 4.500 9l5-7.500" stroke="#5a3424" strokeWidth="2" />
                </svg>
              </span>
              <span className="ml-[9px] text-[14.3px] text-[#4c5464]">{name}</span>
            </div>
          ))}
        </div>
      </div>
    </div>
  )
}

export default function App() {
  return (
    <div className="w-[1280px] h-[957px] overflow-hidden flex flex-col bg-[#f2f1f0]" style={ui}>
      <div className="h-[23px] shrink-0 bg-[#3c3b37] flex items-center pl-[6px] gap-[17px] text-[14px] text-[#dfdbd2]">
        {menus.map((m) => (
          <span key={m}>{m}</span>
        ))}
      </div>
      <TopToolbar />
      <AuxToolbar />
      <div className="h-[2px] shrink-0 bg-[#c4c3c0]" />
      <div className="flex-1 flex min-h-0">
        <LeftToolbar />
        <div className="w-[1013px] shrink-0 relative">
          <Board />
          <div className="absolute right-0 top-[398px] w-[3px] h-[32px] bg-[#ee7a4c]" />
          <div className="absolute left-[533px] bottom-0 w-[33px] h-[3px] bg-[#ee7a4c]" />
        </div>
        <RightToolbar />
        <div className="w-[7px] shrink-0 bg-[#e4e3e1] flex items-center justify-center">
          <div className="w-[4px] h-[8px] border-y border-[#c0bfbc]" />
        </div>
        <LayerPanel />
      </div>
      <div className="h-[38px] shrink-0 bg-[#f7f6f4] border-y border-[#bdbcb9] pl-[15px] text-[14px] leading-[17px] pt-px tracking-[0.41px] text-[#00828c]">
        <div>Backup file: '/home/pcbreflux/nordic/kicad/ESP32-HELP-Button/ESP32-HELP-Button.kicad_pcb-bak'</div>
        <div>Wrote board file: '/home/pcbreflux/nordic/kicad/ESP32-HELP-Button/ESP32-HELP-Button.kicad_pcb'</div>
      </div>
      <div className="h-[21px] shrink-0 flex items-center text-[14px] text-[#4b4b4b] whitespace-pre">
        <span className="ml-[434px] w-[70px]">Z 3,60</span>
        <span className="w-[208px]">X 2,913386  Y 1,220472</span>
        <span className="w-[326px]">dx 2,913386  dy 1,220472  dist 3,1587</span>
        <span className="w-[54px]">Inches</span>
        <span className="tracking-[0.3px]">Add dimension</span>
      </div>
    </div>
  )
}
